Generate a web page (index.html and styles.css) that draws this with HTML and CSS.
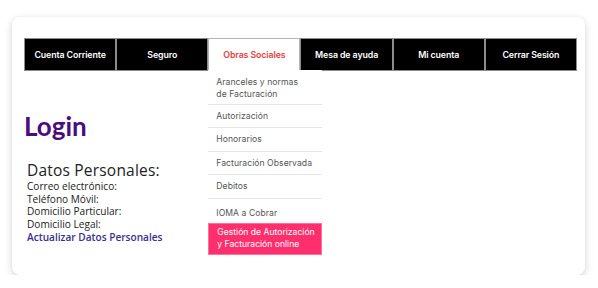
FILE: index.html
```html
<!DOCTYPE html>
<html lang="es">
<head>
<meta charset="utf-8">
<link rel="stylesheet" href="styles.css">
</head>
<body>
<div class="card">
  <nav class="nav">
    <a class="nav-item">Cuenta Corriente</a>
    <a class="nav-item">Seguro</a>
    <div class="nav-item active">Obras Sociales
      <ul class="dropdown">
        <li class="dd-item first">Aranceles y normas<br>de Facturación</li>
        <li class="dd-item">Autorización</li>
        <li class="dd-item">Honorarios</li>
        <li class="dd-item">Facturación Observada</li>
        <li class="dd-item">Debitos</li>
        <li class="dd-item plain">IOMA a Cobrar</li>
        <li class="dd-item highlight">Gestión de Autorización<br>y Facturación online</li>
      </ul>
    </div>
    <a class="nav-item">Mesa de ayuda</a>
    <a class="nav-item">Mi cuenta</a>
    <a class="nav-item">Cerrar Sesión</a>
  </nav>
  <section class="content">
    <h1 class="title">Login</h1>
    <div class="datos">
      <h2 class="datos-title">Datos Personales:</h2>
      <p class="line">Correo electrónico:</p>
      <p class="line">Teléfono Móvil:</p>
      <p class="line">Domicilio Particular:</p>
      <p class="line">Domicilio Legal:</p>
      <p class="line link">Actualizar Datos Personales</p>
    </div>
  </section>
</div>
</body>
</html>
```
FILE: styles.css
```css
html, body {
  margin: 0;
  padding: 0;
  background: #ffffff;
}
body {
  font-family: "Open Sans", "Liberation Sans", sans-serif;
}
.card {
  margin: 17px 0 0 12px;
  width: 573px;
  height: 258px;
  box-sizing: border-box;
  padding: 21px 8px 0 12px;
  background: #fff;
  border-radius: 8px;
  box-shadow: 0 3px 8px rgba(0, 0, 0, 0.16), 0 0 3px rgba(0, 0, 0, 0.05);
}
.nav {
  display: grid;
  grid-template-columns: repeat(6, 1fr);
  height: 33px;
}
.nav-item {
  position: relative;
  display: flex;
  align-items: center;
  justify-content: center;
  background: #000;
  color: #fff;
  border: 1px solid #8c8c8c;
  font-family: Inter, "Liberation Sans", sans-serif;
  font-weight: 600;
  font-size: 8.8px;
  letter-spacing: -0.1px;
}
.nav-item.active {
  background: #fff;
  color: #e8403f;
  border: 1.5px solid #b5b5b5;
}
.dropdown {
  position: absolute;
  top: 100%;
  left: -1px;
  width: 114px;
  margin: 0;
  padding: 0;
  list-style: none;
  background: #fff;
  z-index: 2;
}
.dd-item {
  display: flex;
  align-items: center;
  height: 23.5px;
  box-sizing: border-box;
  padding: 0 8px;
  border-bottom: 1px solid #e6e6e6;
  font-family: Inter, "Liberation Sans", sans-serif;
  font-weight: 400;
  font-size: 8.6px;
  line-height: 12px;
  color: #555;
  letter-spacing: 0.05px;
  white-space: nowrap;
}
.dd-item.first {
  height: 34.5px;
  padding-top: 2px;
}
.dd-item.plain {
  border-bottom: none;
  height: 24px;
  padding-top: 4px;
}
.dd-item.highlight {
  height: 32px;
  background: #ff2f6e;
  color: #fff;
  border: 1px solid #ff6f9a;
  line-height: 11.5px;
  letter-spacing: 0;
}
.content {
  padding: 40px 0 0 0;
}
.title {
  margin: 0;
  font-family: Lato, "Liberation Sans", sans-serif;
  font-weight: 700;
  font-size: 26px;
  line-height: 30px;
  color: #4b0c7c;
}
.datos {
  margin-top: 20px;
  padding-left: 3px;
}
.datos-title {
  margin: 0;
  font-family: "Open Sans", "Liberation Sans", sans-serif;
  font-weight: 400;
  font-size: 15.5px;
  line-height: 19px;
  color: #222;
  letter-spacing: 0.2px;
}
.line {
  margin: 0;
  font-size: 10.1px;
  line-height: 12.7px;
  color: #222;
}
.line.link {
  color: #3a2e8e;
  font-weight: 600;
}
```
